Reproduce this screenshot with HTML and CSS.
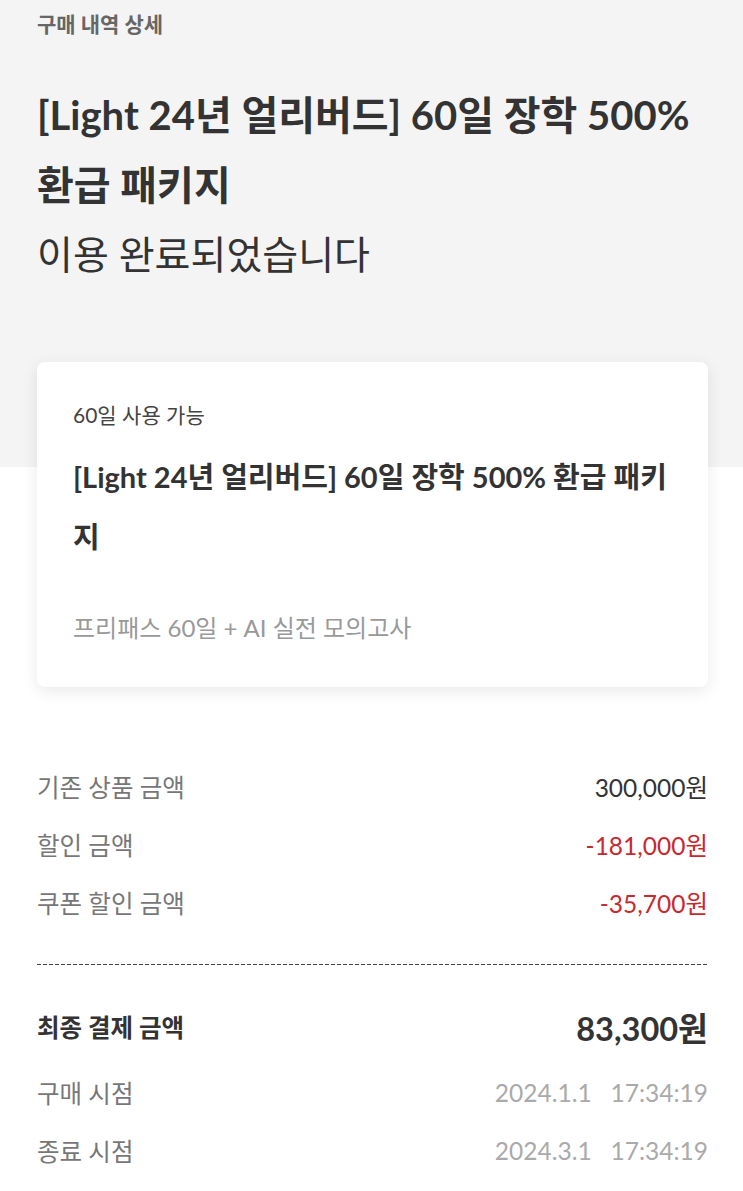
FILE: index.html
```html
<!DOCTYPE html>
<html lang="ko">
<head>
    <meta charset="UTF-8">
    <meta name="viewport" content="width=device-width, initial-scale=1.0">
    <title>구매 내역 상세</title>
    <link rel="stylesheet" href="styles.css">
</head>
<body>
    <div class="header">
        <div class="page-label">구매 내역 상세</div>
        <h1 class="title">[Light 24년 얼리버드] 60일 장학 500% 환급 패키지</h1>
        <p class="status">이용 완료되었습니다</p>
    </div>

    <div class="card-wrap">
        <div class="card">
            <div class="card-period">60일 사용 가능</div>
            <div class="card-title">[Light 24년 얼리버드] 60일 장학 500% 환급 패키지</div>
            <div class="card-desc">프리패스 60일 + AI 실전 모의고사</div>
        </div>
    </div>

    <div class="price-list">
        <div class="row">
            <span class="label">기존 상품 금액</span>
            <span class="value">300,000원</span>
        </div>
        <div class="row">
            <span class="label">할인 금액</span>
            <span class="value red">-181,000원</span>
        </div>
        <div class="row">
            <span class="label">쿠폰 할인 금액</span>
            <span class="value red">-35,700원</span>
        </div>
    </div>

    <div class="divider"></div>

    <div class="total-list">
        <div class="row total">
            <span class="label">최종 결제 금액</span>
            <span class="value">83,300원</span>
        </div>
        <div class="row">
            <span class="label">구매 시점</span>
            <span class="value light">2024.1.1&nbsp;&nbsp; 17:34:19</span>
        </div>
        <div class="row">
            <span class="label">종료 시점</span>
            <span class="value light">2024.3.1&nbsp;&nbsp; 17:34:19</span>
        </div>
    </div>
</body>
</html>
```

FILE: styles.css
```css
body {
    margin: 0;
    font-family: Lato, "Noto Sans CJK KR", sans-serif;
    color: #333;
    background: #fff;
    background-image: linear-gradient(#f4f4f4, #f4f4f4);
    background-size: 100% 467px;
    background-repeat: no-repeat;
}
.header {
    padding: 10px 37px 0;
}
.page-label {
    font-size: 21px;
    font-weight: bold;
    color: #666;
    line-height: 28px;
}
.title {
    margin: 42px 0 0;
    font-size: 40px;
    font-weight: bold;
    line-height: 70px;
    color: #333;
}
.status {
    margin: 0;
    font-size: 39px;
    line-height: 68px;
    color: #333;
}
.card-wrap {
    padding: 74px 35px 0 37px;
}
.card {
    background: #fff;
    border-radius: 8px;
    box-shadow: 0 4px 16px rgba(0, 0, 0, 0.09);
    padding: 38px 36px 44px;
}
.card-period {
    font-size: 21px;
    color: #444;
    line-height: 30px;
}
.card-title {
    margin-top: 17px;
    font-size: 29px;
    font-weight: bold;
    line-height: 60px;
    color: #333;
}
.card-desc {
    margin-top: 46px;
    font-size: 24px;
    color: #999;
    line-height: 30px;
}
.price-list {
    padding: 70px 35px 0 37px;
}
.row {
    display: flex;
    justify-content: space-between;
    align-items: center;
    height: 58px;
    font-size: 24.5px;
}
.label {
    color: #777;
}
.value {
    color: #333;
}
.red {
    color: #c8282f;
}
.light {
    color: #aaa;
}
.divider {
    margin: 33px 35px 0 37px;
    height: 1px;
    background: repeating-linear-gradient(90deg, #444 0 4px, transparent 4px 6px);
}
.total-list {
    padding: 25px 35px 0 37px;
}
.total {
    height: 73px;
}
.total .label {
    color: #333;
    font-weight: bold;
}
.total .value {
    font-size: 32.5px;
    font-weight: bold;
    color: #333;
}
```
